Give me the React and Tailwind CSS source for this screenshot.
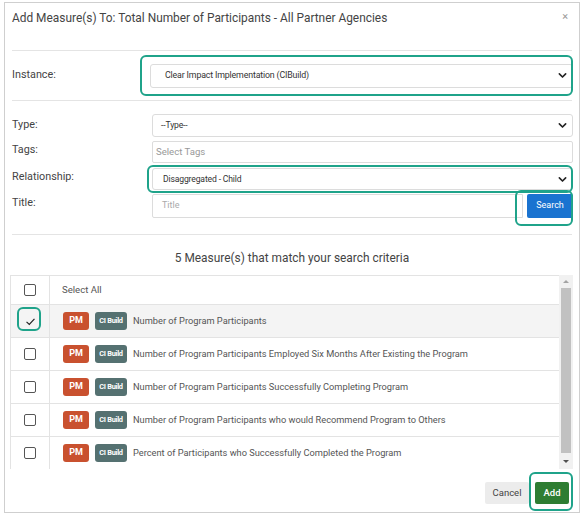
import React from "react";

function Chevron() {
  return (
    <svg width="9" height="9" viewBox="0 0 10 10" className="shrink-0">
      <path d="M1.5 3.2 L5 6.7 L8.5 3.2" fill="none" stroke="#222" strokeWidth="1.8" strokeLinecap="round" strokeLinejoin="round" />
    </svg>
  );
}

function Select({ text, h = "h-[23px]", pl = "pl-[8px]", tcls = "text-[8.6px]" }) {
  return (
    <div className={`flex-1 ${h} border border-[#dcdcdc] rounded-[3px] bg-white flex items-center justify-between ${pl} pr-[5px]`}>
      <span className={`inline-block text-[#333] whitespace-nowrap tracking-[-0.15px] ${tcls}`}>{text}</span>
      <Chevron />
    </div>
  );
}

function Box({ checked }) {
  if (checked) {
    return (
      <div className="w-[12px] h-[12px] flex items-center justify-center">
        <svg width="11" height="11" viewBox="0 0 10 10">
          <path d="M1.4 5.3 L3.9 7.6 L8.6 2.6" fill="none" stroke="#222" strokeWidth="1.1" />
        </svg>
      </div>
    );
  }
  return <div className="w-[12px] h-[12px] border border-[#555] rounded-[2px] bg-white" />;
}

const rows = [
  "Number of Program Participants",
  "Number of Program Participants Employed Six Months After Existing the Program",
  "Number of Program Participants Successfully Completing Program",
  "Number of Program Participants who would Recommend Program to Others",
  "Percent of Participants who Successfully Completed the Program",
];

function Teal({ cls }) {
  return <div className={`absolute border-2 border-[#1fa38a] rounded-[6px] pointer-events-none ${cls}`} />;
}

export default function App() {
  return (
    <div className="relative w-[583px] h-[518px] bg-white overflow-hidden font-['Roboto','Liberation_Sans',sans-serif]">
      <div className="ml-[4px] mt-[2px] w-[576px] h-[511px] border border-[#cfcfcf] flex flex-col">
        {/* header */}
        <div className="h-[47px] flex justify-between px-[7px] pt-[6px]">
          <div className="text-[11.9px] text-[#444] leading-[18px]">
            Add Measure(s) To: Total Number of Participants - All Partner Agencies
          </div>
          <div className="text-[11px] text-[#999] leading-[12px] pt-[2px] pr-[4px]">×</div>
        </div>
        <div className="mx-[7px] border-t border-[#e4e4e4]" />
        {/* instance */}
        <div className="h-[49px] flex items-center pl-[7px] pr-[6px]">
          <div className="w-[138px] text-[10.8px] text-[#444]">Instance:</div>
          <Select text="Clear Impact Implementation (CIBuild)" h="h-[24px]" pl="pl-[14px]" tcls="text-[8.8px]" />
        </div>
        <div className="mx-[7px] border-t border-[#e4e4e4]" />
        {/* filters */}
        <div className="flex flex-col pt-[13px] pl-[7px] pr-[6px]">
          <div className="flex items-start">
            <div className="w-[140px] text-[10.8px] text-[#444] pt-[3px]">Type:</div>
            <Select text="--Type--" />
          </div>
          <div className="flex items-start mt-[4px]">
            <div className="w-[140px] text-[10.8px] text-[#444] pt-[1px]">Tags:</div>
            <div className="flex-1 h-[22px] border border-[#dcdcdc] rounded-[2px] flex items-center pl-[3px] text-[9.6px] text-[#999]">
              Select Tags
            </div>
          </div>
          <div className="flex items-start mt-[5px]">
            <div className="w-[140px] text-[10.8px] text-[#444] pt-[1px]">Relationship:</div>
            <Select text="Disaggregated - Child" h="h-[22px]" pl="pl-[10px]" tcls="text-[8.6px]" />
          </div>
          <div className="flex items-start mt-[4px]">
            <div className="w-[140px] text-[10.8px] text-[#444] pt-[1px]">Title:</div>
            <div className="flex-1 h-[24px] border border-[#dcdcdc] rounded-l-[2px] flex items-center pl-[9px] text-[9px] text-[#aaa]">
              Title
            </div>
            <div className="ml-[4px] w-[46px] h-[24px] bg-[#1a73d0] rounded-[2px] flex items-center justify-center text-[9px] text-white">
              Search
            </div>
          </div>
        </div>
        <div className="mt-[16px] mx-[7px] border-t border-[#e4e4e4]" />
        <div className="h-[40px] pt-[8px] flex items-center justify-center text-[11.9px] text-[#444]">
          5 Measure(s) that match your search criteria
        </div>
        {/* table */}
        <div className="ml-[5px] mr-[6px] h-[194px] flex overflow-hidden">
          <div className="flex-1 flex flex-col border-l border-[#e3e3e3]">
            <div className="h-[30px] shrink-0 flex border-t border-b border-[#e3e3e3]">
              <div className="w-[39px] flex items-center justify-center border-r border-[#e3e3e3]">
                <Box />
              </div>
              <div className="flex items-center pl-[12px] text-[9.6px] text-[#555]">Select All</div>
            </div>
            {rows.map((r, i) => (
              <div key={i} className={`h-[33px] shrink-0 flex border-b border-[#e3e3e3] ${i === 0 ? "bg-[#f4f4f4]" : "bg-white"}`}>
                <div className="w-[39px] flex items-center justify-center border-r border-[#e3e3e3]">
                  <Box checked={i === 0} />
                </div>
                <div className="flex items-center pl-[13px] gap-[6px]">
                  <span className="w-[26px] h-[18px] rounded-[3px] bg-[#c9512f] text-white text-[9px] font-bold flex items-center justify-center">PM</span>
                  <span className="w-[32px] h-[18px] rounded-[3px] bg-[#557171] text-white text-[7.4px] font-bold tracking-[-0.3px] flex items-center justify-center whitespace-nowrap">CI Build</span>
                  <span className="text-[9.25px] text-[#555]">{r}</span>
                </div>
              </div>
            ))}
          </div>
          {/* scrollbar */}
          <div className="w-[14px] bg-[#f1f1f1] flex flex-col items-center">
            <div className="h-[13px] flex items-center justify-center">
              <div className="w-0 h-0 border-l-[3px] border-r-[3px] border-b-[3px] border-l-transparent border-r-transparent border-b-[#a3a3a3]" />
            </div>
            <div className="w-[10px] flex-1 bg-[#c1c1c1]" />
            <div className="h-[16px] flex items-center justify-center">
              <div className="w-0 h-0 border-l-[3px] border-r-[3px] border-t-[3px] border-l-transparent border-r-transparent border-t-[#505050]" />
            </div>
          </div>
        </div>
        {/* footer */}
        <div className="flex justify-end gap-[6px] pr-[10px] pt-[13px]">
          <div className="w-[44px] h-[22px] bg-[#ececec] rounded-[2px] flex items-center justify-center text-[9.5px] text-[#444]">Cancel</div>
          <div className="w-[34px] h-[22px] bg-[#2e7d32] rounded-[2px] flex items-center justify-center text-[9.5px] font-medium text-white">Add</div>
        </div>
      </div>
      <Teal cls="left-[140px] top-[55px] w-[433px] h-[41px]" />
      <Teal cls="left-[147px] top-[165px] w-[426px] h-[28px]" />
      <Teal cls="left-[515px] top-[190px] w-[58px] h-[36px]" />
      <Teal cls="left-[17px] top-[307px] w-[24px] h-[24px]" />
      <Teal cls="left-[529px] top-[472px] w-[44px] h-[39px]" />
    </div>
  );
}
